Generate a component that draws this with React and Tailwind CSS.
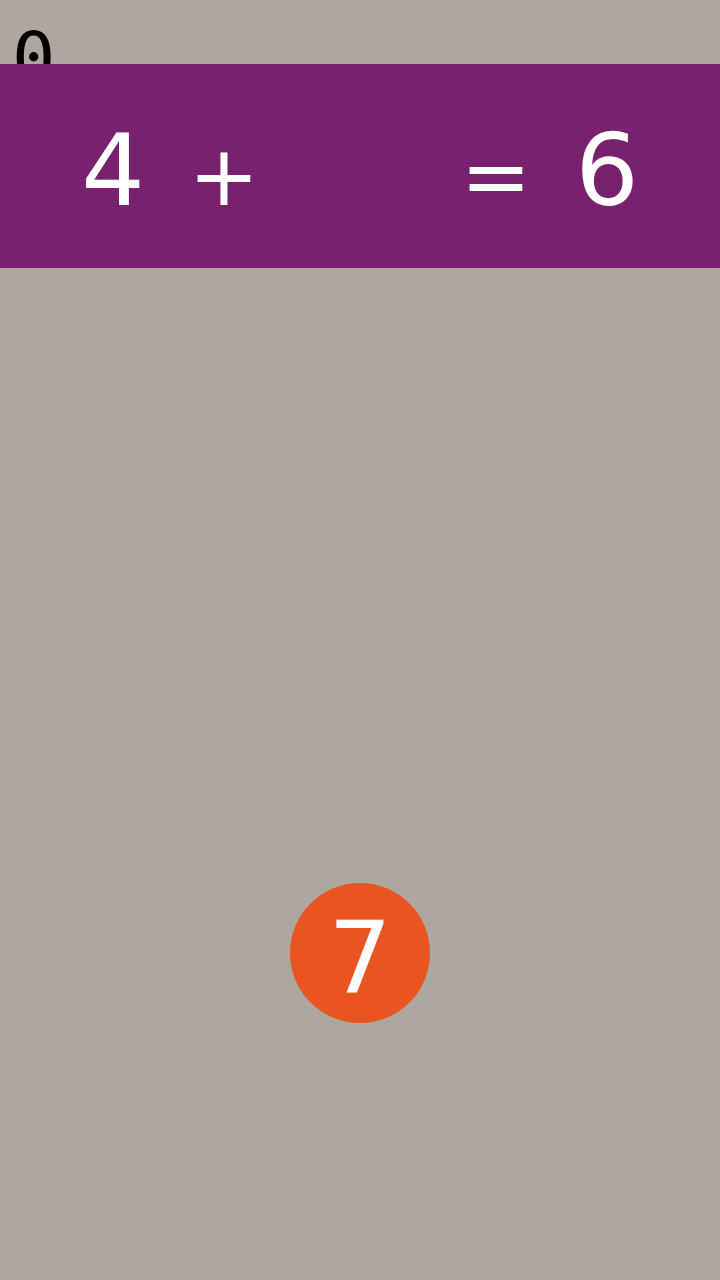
import React from 'react';

const Cell = ({ children, wide, op }) => (
	<div
		className={`${wide ? 'w-[161px] self-start' : 'w-[111px]'} ${op ? 'text-[84px]' : 'text-[100px]'} text-center`}
	>
		{children}
	</div>
);

const App = () => {
	const left = 4;
	const right = 6;
	const answer = 7;
	const score = 0;

	return (
		<div className="flex h-[1280px] w-full flex-col bg-[#aea79f]">
			<div className="h-16 overflow-hidden pl-[12px] pt-[22px]">
				<span className="font-['DejaVu_Sans_Mono',monospace] text-[72px] leading-none text-black">
					{score}
				</span>
			</div>

			<div className="flex h-[204px] items-baseline justify-center bg-[#77216f] pt-[57px] font-['DejaVu_Sans',sans-serif] leading-none text-white">
				<Cell>{left}</Cell>
				<Cell op>+</Cell>
				<Cell wide />
				<Cell op>=</Cell>
				<Cell>{right}</Cell>
			</div>

			<div className="flex justify-center pt-[615px]">
				<div className="flex h-[140px] w-[140px] items-center justify-center rounded-full bg-[#e95420] pt-[12px] font-['DejaVu_Sans',sans-serif] text-[100px] leading-none text-white">
					{answer}
				</div>
			</div>
		</div>
	);
};

export default App;
